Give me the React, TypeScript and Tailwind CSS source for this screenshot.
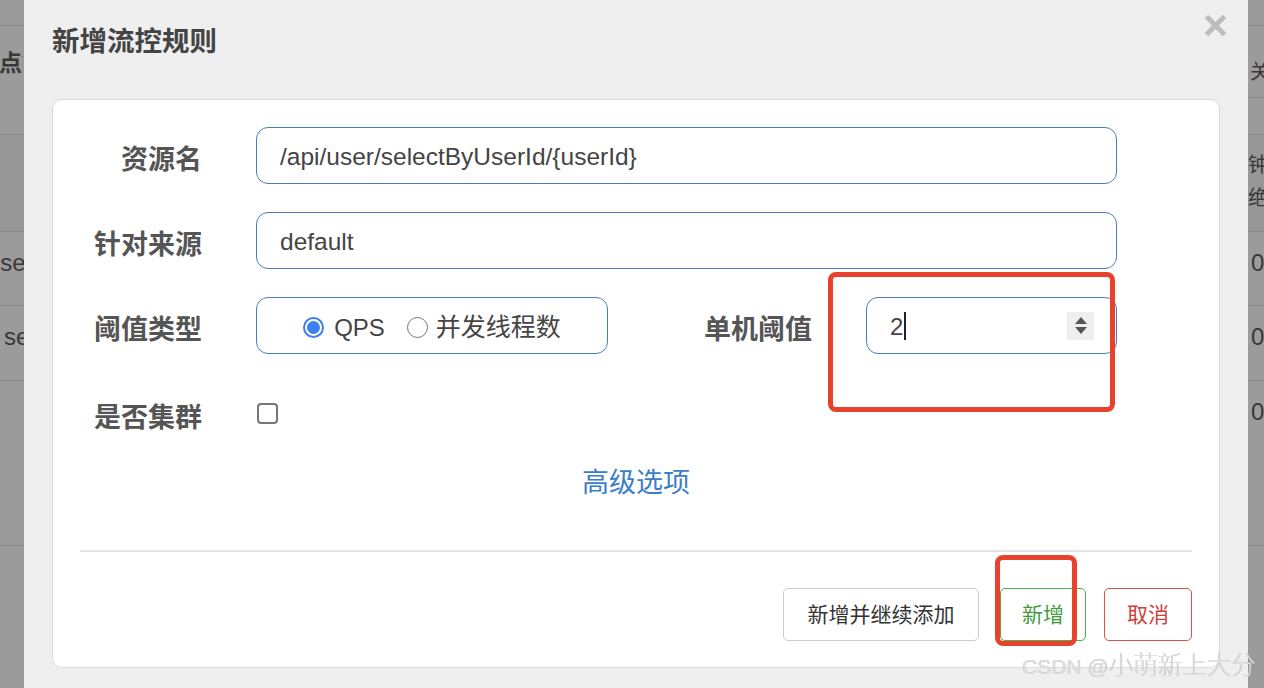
import React from 'react'

const FONT = { fontFamily: '"Liberation Sans", "Noto Sans CJK SC", sans-serif' }

function BgTable() {
  // 背后被弹窗遮住的表格，只露出左右两条边
  const cell = 'border-b border-[#8a8a8a] overflow-hidden whitespace-nowrap'
  return (
    <div className="flex flex-col text-[#383838]">
      <div className="flex justify-between h-[26px]">
        <div className={`w-[24px] ${cell}`} />
        <div className={`w-[16px] ${cell}`} />
      </div>
      <div className="flex justify-between h-[72px]">
        <div className="w-[24px] overflow-hidden whitespace-nowrap pt-[23px] text-[23px] leading-[28px] font-bold -ml-[1px]">点链</div>
        <div className={`w-[16px] ${cell} pt-[32px] pl-[2px] text-[20px] leading-[28px]`}>关闭</div>
      </div>
      <div className="flex justify-between h-[37px]">
        <div className={`w-[24px] ${cell}`} />
        <div className={`w-[16px] ${cell}`} />
      </div>
      <div className="flex justify-between h-[97px] bg-[#979797]">
        <div className={`w-[24px] ${cell}`} />
        <div className={`w-[16px] ${cell} pt-[14px] text-[20px] leading-[33px]`}>
          <div>钟</div>
          <div>绝</div>
        </div>
      </div>
      <div className="flex justify-between h-[74px]">
        <div className={`w-[24px] ${cell} pt-[17px] text-[24px] leading-[28px]`}>
          <div className="-ml-[13px]">user</div>
        </div>
        <div className={`w-[16px] ${cell} pt-[17px] pl-[3px] text-[24px] leading-[28px]`}>0</div>
      </div>
      <div className="flex justify-between h-[75px]">
        <div className={`w-[24px] ${cell} pt-[17px] text-[24px] leading-[28px]`}>
          <div className="ml-[4px]">sel</div>
        </div>
        <div className={`w-[16px] ${cell} pt-[17px] pl-[3px] text-[24px] leading-[28px]`}>0</div>
      </div>
      <div className="flex justify-between h-[165px]">
        <div className={`w-[24px] ${cell}`} />
        <div className={`w-[16px] ${cell} pt-[17px] pl-[3px] text-[24px] leading-[28px]`}>0</div>
      </div>
    </div>
  )
}

function Label({ text, width = 'w-[122px]' }: { text: string; width?: string }) {
  return (
    <div className={`${width} shrink-0 pt-[9px] text-right text-[27px] font-bold text-[#555] leading-[30px]`}>{text}</div>
  )
}

function TextInput({ value }: { value: string }) {
  return (
    <div className="ml-[54px] w-[861px] h-[57px] rounded-[12px] border border-[#4b7cbd] flex items-center pl-[23px] pt-[3px] text-[24.5px] text-[#444]">
      {value}
    </div>
  )
}

export default function App() {
  return (
    <div className="relative w-[1264px] h-[688px] overflow-hidden bg-[#9b9b9b]" style={FONT}>
      <BgTable />

      {/* 弹窗 */}
      <div className="absolute left-[24px] top-0 w-[1224px] h-[688px] bg-[#efefef] px-[28px]">
        <div className="h-[99px] flex justify-between items-start">
          <h4 className="pt-[28px] text-[27.5px] leading-[28px] font-bold text-[#444]">新增流控规则</h4>
          <svg className="mt-[14px] -mr-[7px]" width="23" height="23" viewBox="0 0 23 23">
            <path d="M2.5 2.5 L20.5 20.5 M20.5 2.5 L2.5 20.5" stroke="#bcbcbc" strokeWidth="5" />
          </svg>
        </div>

        <div className="bg-white border border-[#dcdcdc] rounded-[10px] h-[569px] px-[27px] pt-[27px]">
          <div className="flex items-center h-[57px]">
            <Label text="资源名" />
            <TextInput value="/api/user/selectByUserId/{userId}" />
          </div>
          <div className="flex items-center h-[57px] mt-[28px]">
            <Label text="针对来源" />
            <TextInput value="default" />
          </div>
          <div className="flex items-center h-[57px] mt-[28px]">
            <Label text="阈值类型" />
            <div className="ml-[54px] w-[352px] h-[57px] rounded-[12px] border border-[#4b7cbd] flex items-center justify-center pt-[4px] text-[24px] text-[#444]">
              <span className="w-[21px] h-[21px] rounded-full border-2 border-[#3b7ff0] flex items-center justify-center">
                <span className="w-[13px] h-[13px] rounded-full bg-[#3b7ff0]" />
              </span>
              <span className="ml-[10px]">QPS</span>
              <span className="ml-[22px] w-[21px] h-[21px] rounded-full border-[1.5px] border-[#777]" />
              <span className="ml-[8px] text-[25px]">并发线程数</span>
            </div>
            <Label text="单机阈值" width="w-[204px]" />
            <div className="ml-[54px] w-[251px] h-[57px] rounded-[12px] border border-[#4b7cbd] flex items-center pl-[23px] pr-[22px] text-[24px] text-[#444]">
              <span className="pt-[3px]">2</span>
              <span className="ml-[1px] w-[1.5px] h-[28px] bg-[#222]" />
              <div className="ml-auto w-[27px] h-[28px] bg-[#eeeeee] flex flex-col items-center justify-center gap-[3px]">
                <svg width="12" height="7" viewBox="0 0 12 7"><path d="M6 0 L12 7 L0 7 Z" fill="#555" /></svg>
                <svg width="12" height="7" viewBox="0 0 12 7"><path d="M0 0 L12 0 L6 7 Z" fill="#555" /></svg>
              </div>
            </div>
          </div>
          <div className="flex items-center h-[57px] mt-[31px]">
            <Label text="是否集群" />
            <span className="ml-[55px] w-[21px] h-[21px] rounded-[4px] border-2 border-[#777]" />
          </div>

          <div className="mt-[27px] text-center text-[27px] leading-[28px] text-[#3b7dc8]">高级选项</div>

          <div className="mt-[53px] h-[2px] bg-[#e4e4e4]" />

          <div className="mt-[36px] flex justify-end text-[21px]">
            <button className="w-[196px] h-[53px] rounded-[5px] border border-[#cccccc] bg-white text-[#333]">新增并继续添加</button>
            <button className="ml-[21px] w-[86px] h-[53px] rounded-[5px] border border-[#4cae4c] bg-white text-[#3d9b3d]">新增</button>
            <button className="ml-[18px] w-[88px] h-[53px] rounded-[5px] border border-[#d9534f] bg-white text-[#cf3e3a]">取消</button>
          </div>
        </div>
      </div>

      {/* 红色标注框 */}
      <div className="absolute left-[828px] top-[272px] w-[287px] h-[140px] rounded-[8px] border-[5px] border-[#e8412c]" />
      <div className="absolute left-[995px] top-[555px] w-[82px] h-[91px] rounded-[8px] border-[5px] border-[#e8412c]" />

      {/* 水印 */}
      <div className="absolute left-[1022px] top-[651px] whitespace-nowrap text-[21px] leading-[30px] font-light text-[#e2e2e2] [text-shadow:0_0_0.6px_#8a8a8a]">
        CSDN @<span className="text-[24.5px] font-light">小萌新上大分</span>
      </div>
    </div>
  )
}
